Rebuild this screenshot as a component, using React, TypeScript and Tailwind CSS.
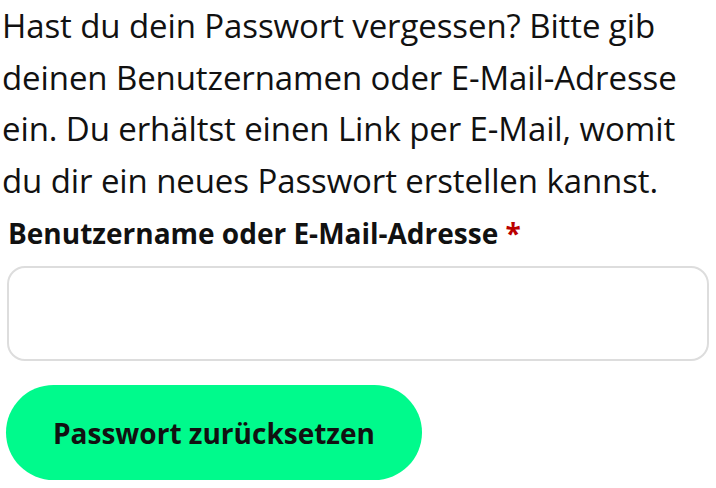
import React from 'react';

const App: React.FC = () => {
  return (
    <div className="w-[716px] h-[488px] bg-white text-[#111] font-['Open_Sans',sans-serif] overflow-hidden">
      <p className="pl-[2px] text-[33px] leading-[51.5px] tracking-[-0.1px]">
        Hast du dein Passwort vergessen? Bitte gib<br />
        deinen Benutzernamen oder E-Mail-Adresse<br />
        ein. Du erhältst einen Link per E-Mail, womit<br />
        du dir ein neues Passwort erstellen kannst.
      </p>
      <label className="block pl-[8px] mt-[9px] text-[28px] font-bold leading-[36px]">
        Benutzername oder E-Mail-Adresse <span className="text-[#b00]">*</span>
      </label>
      <input
        type="text"
        className="block ml-[7px] mt-[15px] w-[702px] h-[95px] border-2 border-[#ddd] rounded-[18px] outline-none"
      />
      <button className="block ml-[6px] mt-[24px] w-[416px] h-[95px] rounded-full bg-[#00fa8c] text-[28px] font-bold">
        Passwort zurücksetzen
      </button>
    </div>
  );
};

export default App;
